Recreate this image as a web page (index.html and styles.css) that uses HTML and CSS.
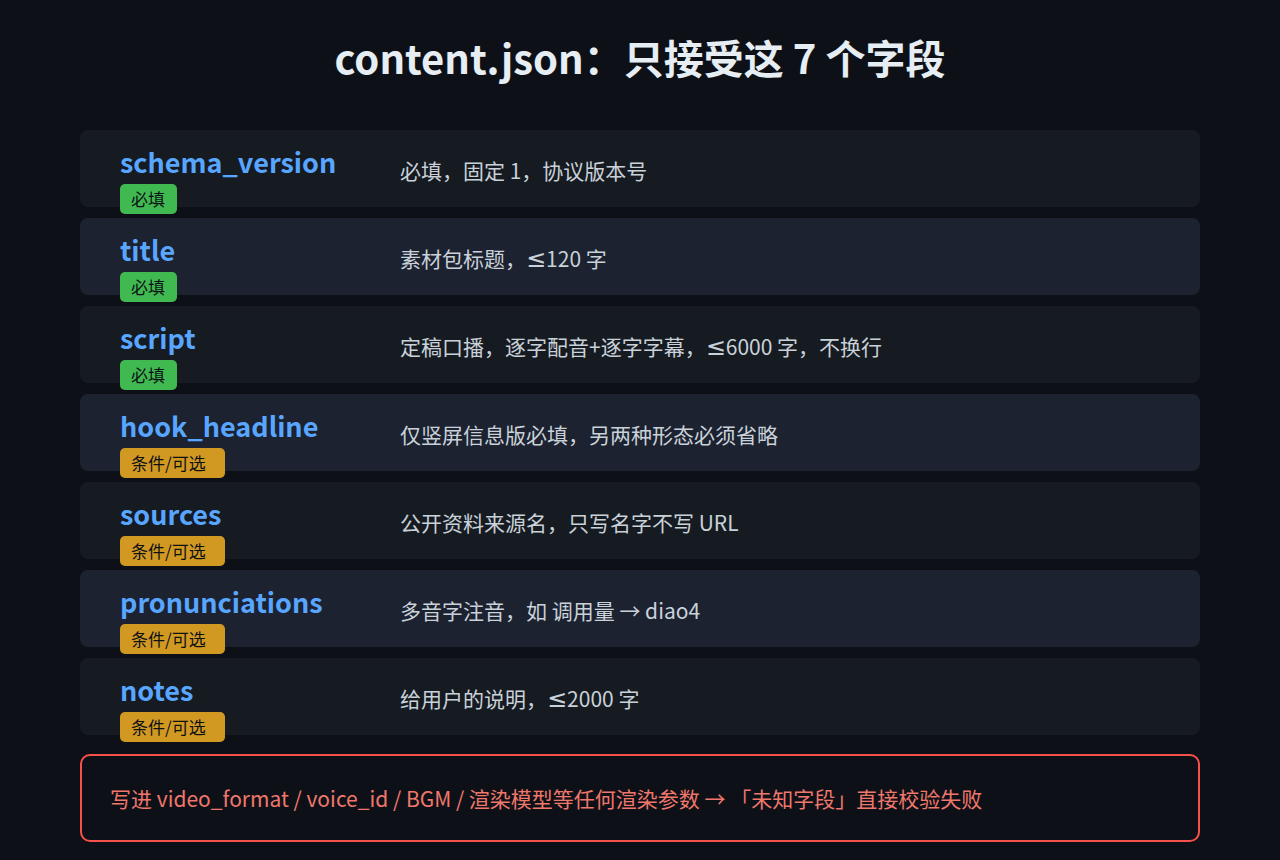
FILE: index.html
```html
<!DOCTYPE html>
<html lang="zh-CN">
<head>
    <meta charset="UTF-8">
    <meta name="viewport" content="width=device-width, initial-scale=1.0">
    <title>content.json 字段</title>
    <link rel="stylesheet" href="styles.css">
</head>
<body>
    <div class="page">
        <h1 class="title">content.json：只接受这 7 个字段</h1>

        <div class="fields">
            <div class="field">
                <div class="field-key">
                    <div class="field-name">schema_version</div>
                    <span class="badge required">必填</span>
                </div>
                <div class="field-desc">必填，固定 1，协议版本号</div>
            </div>
            <div class="field">
                <div class="field-key">
                    <div class="field-name">title</div>
                    <span class="badge required">必填</span>
                </div>
                <div class="field-desc">素材包标题，<span class="sym">≤</span>120 字</div>
            </div>
            <div class="field">
                <div class="field-key">
                    <div class="field-name">script</div>
                    <span class="badge required">必填</span>
                </div>
                <div class="field-desc">定稿口播，逐字配音+逐字字幕，<span class="sym">≤</span>6000 字，不换行</div>
            </div>
            <div class="field">
                <div class="field-key">
                    <div class="field-name">hook_headline</div>
                    <span class="badge optional">条件/可选</span>
                </div>
                <div class="field-desc">仅竖屏信息版必填，另两种形态必须省略</div>
            </div>
            <div class="field">
                <div class="field-key">
                    <div class="field-name">sources</div>
                    <span class="badge optional">条件/可选</span>
                </div>
                <div class="field-desc">公开资料来源名，只写名字不写 URL</div>
            </div>
            <div class="field">
                <div class="field-key">
                    <div class="field-name">pronunciations</div>
                    <span class="badge optional">条件/可选</span>
                </div>
                <div class="field-desc">多音字注音，如 调用量 → diao4</div>
            </div>
            <div class="field">
                <div class="field-key">
                    <div class="field-name">notes</div>
                    <span class="badge optional">条件/可选</span>
                </div>
                <div class="field-desc">给用户的说明，<span class="sym">≤</span>2000 字</div>
            </div>
        </div>

        <div class="warning">写进 video_format / voice_id / BGM / 渲染模型等任何渲染参数 → 「未知字段」直接校验失败</div>
    </div>
</body>
</html>
```

FILE: styles.css
```css
body {
    margin: 0;
    background-color: #0d1117;
    font-family: "Noto Sans CJK SC", "Noto Sans", sans-serif;
    color: #c9d1d9;
}
.page {
    width: 1120px;
    margin: 0 auto;
    padding-top: 33px;
}
.title {
    margin: 0 0 49px;
    font-size: 40px;
    line-height: 48px;
    font-weight: 700;
    color: #e6edf3;
    text-align: center;
}
.fields {
    display: flex;
    flex-direction: column;
    gap: 11px;
}
.field {
    display: grid;
    grid-template-columns: 280px 1fr;
    align-items: start;
    height: 77px;
    padding: 0 40px;
    border-radius: 8px;
    background-color: #161b22;
}
.field:nth-child(even) {
    background-color: #1c2230;
}
.field-key {
    padding-top: 15px;
}
.field-name {
    font-size: 27px;
    line-height: 34px;
    font-weight: 700;
    color: #58a6ff;
}
.badge {
    display: inline-block;
    margin-top: 5px;
    padding: 4px 12px 4px 11px;
    border-radius: 5px;
    font-size: 17px;
    line-height: 22px;
    color: #0d1117;
}
.badge.required {
    background-color: #3fb950;
}
.badge.optional {
    background-color: #d29922;
    padding-right: 19px;
}
.field-desc {
    padding-top: 26px;
    font-size: 21px;
    line-height: 28px;
}
.sym {
    font-family: "DejaVu Sans", sans-serif;
    font-size: 24px;
    line-height: 1;
}
.warning {
    display: flex;
    align-items: center;
    height: 84px;
    margin-top: 19px;
    padding: 0 28px;
    border: 2px solid #f85149;
    border-radius: 10px;
    font-size: 21px;
    color: #f0776c;
}
```
